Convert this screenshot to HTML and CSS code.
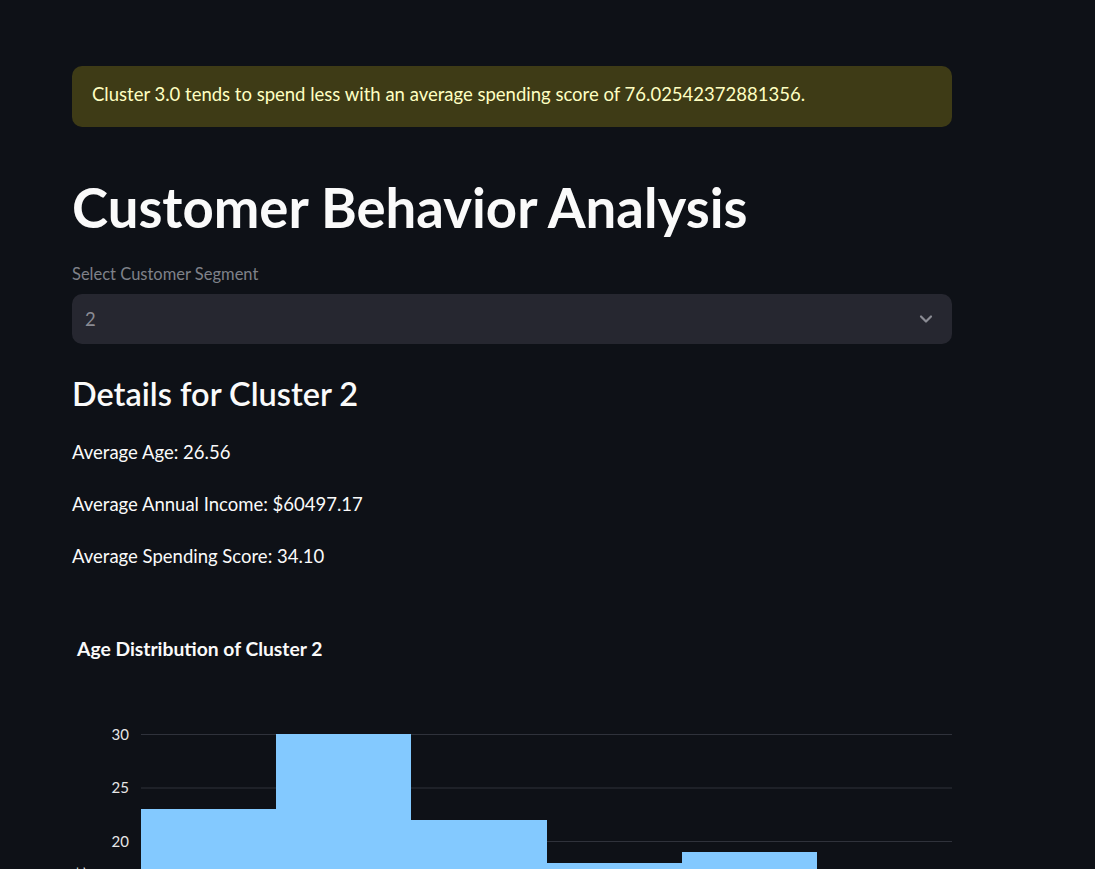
FILE: index.html
```html
<!DOCTYPE html>
<html lang="en">
<head>
<meta charset="utf-8">
<title>Customer Behavior Analysis</title>
<link rel="stylesheet" href="styles.css">
</head>
<body>
<main class="main">
  <div class="alert">Cluster 3.0 tends to spend less with an average spending score of 76.02542372881356.</div>
  <h1 class="title">Customer Behavior Analysis</h1>
  <label class="label">Select Customer Segment</label>
  <div class="select">
    <span class="select-value">2</span>
    <svg class="chev" width="16" height="16" viewBox="0 0 16 16"><path d="M3 5.5 L8 10.5 L13 5.5" fill="none" stroke="currentColor" stroke-width="2.2" stroke-linecap="round" stroke-linejoin="round"/></svg>
  </div>
  <h3 class="subtitle">Details for Cluster 2</h3>
  <p class="stat">Average Age: 26.56</p>
  <p class="stat">Average Annual Income: $60497.17</p>
  <p class="stat">Average Spending Score: 34.10</p>
  <div class="chart">
    <svg class="chart-svg" width="880" height="480" viewBox="0 0 880 480">
      <text class="chart-title" x="5" y="55">Age Distribution of Cluster 2</text>
      <g class="grid">
        <line x1="69" x2="880" y1="133.5" y2="133.5"/>
        <line x1="69" x2="880" y1="187" y2="187"/>
        <line x1="69" x2="880" y1="240.5" y2="240.5"/>
        <line x1="69" x2="880" y1="294" y2="294"/>
        <line x1="69" x2="880" y1="347.5" y2="347.5"/>
        <line x1="69" x2="880" y1="401" y2="401"/>
      </g>
      <g class="ticks">
        <text x="57" y="138.5">30</text>
        <text x="57" y="192">25</text>
        <text x="57" y="245.5">20</text>
        <text x="57" y="299">15</text>
        <text x="57" y="352.5">10</text>
        <text x="57" y="406">5</text>
        <text x="57" y="459.5">0</text>
      </g>
      <g class="bars">
        <rect x="69" y="208" width="135" height="247"/>
        <rect x="204" y="133" width="135" height="322"/>
        <rect x="339" y="219" width="136" height="236"/>
        <rect x="475" y="262" width="135" height="193"/>
        <rect x="610" y="251" width="135" height="204"/>
      </g>
      <text class="axis-title" transform="translate(13 285) rotate(-90)">count</text>
    </svg>
  </div>
</main>
</body>
</html>
```
FILE: styles.css
```css
html, body {
  margin: 0;
  padding: 0;
  background: #0e1117;
  overflow: hidden;
}
body {
  font-family: Lato, "Noto Sans", sans-serif;
  color: #fafafa;
}
.main {
  width: 880px;
  margin-left: 72px;
  padding-top: 66px;
  display: flex;
  flex-direction: column;
}
.alert {
  height: 61px;
  box-sizing: border-box;
  padding: 0 20px 6px;
  display: flex;
  align-items: center;
  background: #3e3b16;
  color: #ffffc2;
  border-radius: 10px;
  font-size: 18.5px;
  line-height: 32px;
}
.title {
  margin: 47px 0 0;
  font-size: 54.5px;
  font-weight: 700;
  line-height: 66px;
  height: 66px;
}
.label {
  margin-top: 23px;
  font-size: 16.5px;
  line-height: 22px;
  color: #7f8189;
}
.select {
  margin-top: 9px;
  height: 50px;
  box-sizing: border-box;
  background: #262730;
  border-radius: 10px;
  display: flex;
  align-items: center;
  justify-content: space-between;
  padding: 0 18px 0 13px;
}
.select-value {
  font-size: 18.5px;
  color: #8a8b93;
}
.chev {
  color: #8b8c94;
}
.subtitle {
  margin: 28px 0 0;
  font-size: 32.5px;
  font-weight: 600;
  line-height: 44px;
}
.stat {
  margin: 20px 0 0;
  font-size: 18.5px;
  line-height: 32px;
}
.chart {
  margin-top: 29px;
}
.chart-svg {
  display: block;
  overflow: visible;
}
.chart-title {
  font-size: 19.3px;
  font-weight: 700;
  fill: #fafafa;
}
.grid line {
  stroke: #2f323b;
  stroke-width: 1;
}
.ticks text {
  font-size: 15px;
  fill: #e6e6e6;
  text-anchor: end;
}
.bars rect {
  fill: #83c9ff;
}
.axis-title {
  font-size: 15px;
  fill: #e6e6e6;
  text-anchor: middle;
}
```
